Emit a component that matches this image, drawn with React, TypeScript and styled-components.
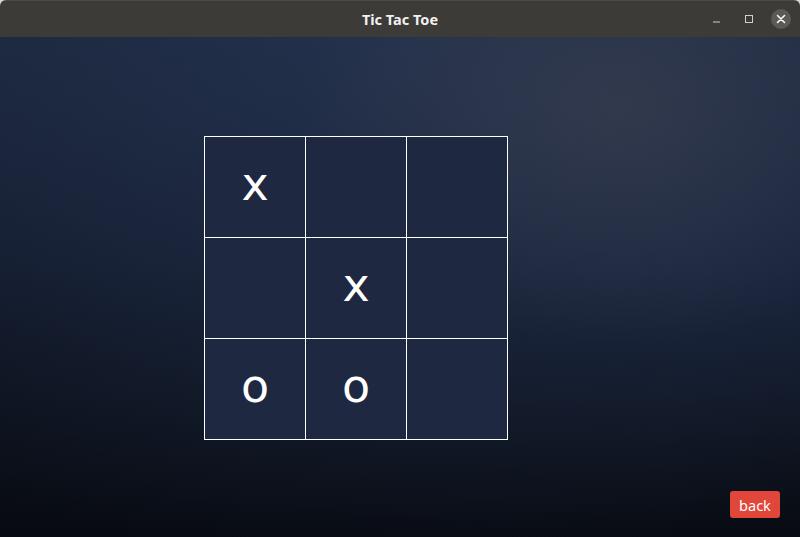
import React from "react";
import styled, { createGlobalStyle } from "styled-components";

const Global = createGlobalStyle`
  html, body { margin: 0; padding: 0; background: #d8d8d8; }
  #root { width: 800px; height: 537px; }
`;

const Window = styled.div`
  width: 800px;
  height: 537px;
  display: flex;
  flex-direction: column;
  overflow: hidden;
  border-radius: 6px 6px 0 0;
`;

const TitleBar = styled.div`
  height: 37px;
  flex: none;
  background: #3c3b38;
  display: flex;
  align-items: center;
  justify-content: center;
  position: relative;
  box-shadow: inset 0 1px 0 rgba(255, 255, 255, 0.08);
`;

const Title = styled.div`
  color: #f2f2f2;
  font-family: "Noto Sans", "DejaVu Sans", sans-serif;
  font-weight: 700;
  font-size: 14.5px;
  letter-spacing: 0;
`;

const Controls = styled.div`
  position: absolute;
  right: 9px;
  top: 0;
  height: 37px;
  display: flex;
  align-items: center;
  gap: 12px;
`;

const CtrlButton = styled.div<{ $round?: boolean }>`
  width: 20px;
  height: 20px;
  display: flex;
  align-items: center;
  justify-content: center;
  border-radius: 50%;
  background: ${(p) => (p.$round ? "#5b5a57" : "transparent")};
`;

const Content = styled.div`
  flex: 1;
  display: flex;
  flex-direction: column;
  padding: 99px 20px 19px 204px;
  background:
    radial-gradient(ellipse 320px 240px at 620px 70px, rgba(70, 72, 84, 0.45), rgba(70, 72, 84, 0) 100%),
    radial-gradient(ellipse 900px 520px at 400px 0px, rgba(36, 50, 78, 0.9), rgba(36, 50, 78, 0) 100%),
    radial-gradient(ellipse 700px 420px at 0px 300px, rgba(5, 8, 14, 0.5), rgba(5, 8, 14, 0) 100%),
    linear-gradient(180deg, #1b263b 0%, #162036 45%, #0c111b 85%, #080b12 100%);
`;

const Board = styled.div`
  display: grid;
  grid-template-columns: repeat(3, 100px);
  grid-template-rows: repeat(3, 100px);
  gap: 1px;
  padding: 1px;
  background: #ffffff;
  width: max-content;
`;

const Cell = styled.div`
  background: #1e2840;
  display: flex;
  align-items: center;
  justify-content: center;
  color: #ffffff;
  font-family: "DejaVu Sans", sans-serif;
  font-size: 46px;
  font-weight: 400;
  line-height: 1;
  padding-bottom: 6px;
  box-sizing: border-box;
`;

const Spacer = styled.div`
  flex: 1;
`;

const Footer = styled.div`
  display: flex;
  justify-content: flex-end;
`;

const BackButton = styled.button`
  width: 50px;
  height: 27px;
  border: none;
  border-radius: 3px;
  background: #e0463a;
  color: #ffffff;
  font-family: "Noto Sans", "DejaVu Sans", sans-serif;
  font-size: 14.5px;
  padding: 0;
  cursor: pointer;
`;

const cells = ["x", "", "", "", "x", "", "o", "o", ""];

export default function App() {
  return (
    <>
      <Global />
      <Window>
        <TitleBar>
          <Title>Tic Tac Toe</Title>
          <Controls>
            <CtrlButton>
              <svg width="10" height="10" viewBox="0 0 10 10">
                <rect x="1" y="7.5" width="7" height="1" fill="#d0d0d0" />
              </svg>
            </CtrlButton>
            <CtrlButton>
              <svg width="10" height="10" viewBox="0 0 10 10">
                <rect x="1.5" y="1.5" width="7" height="7" fill="none" stroke="#d0d0d0" strokeWidth="1" />
              </svg>
            </CtrlButton>
            <CtrlButton $round>
              <svg width="10" height="10" viewBox="0 0 10 10">
                <path d="M1.5 1.5 L8.5 8.5 M8.5 1.5 L1.5 8.5" stroke="#ffffff" strokeWidth="1.5" strokeLinecap="round" />
              </svg>
            </CtrlButton>
          </Controls>
        </TitleBar>
        <Content>
          <Board>
            {cells.map((c, i) => (
              <Cell key={i}>{c}</Cell>
            ))}
          </Board>
          <Spacer />
          <Footer>
            <BackButton>back</BackButton>
          </Footer>
        </Content>
      </Window>
    </>
  );
}
